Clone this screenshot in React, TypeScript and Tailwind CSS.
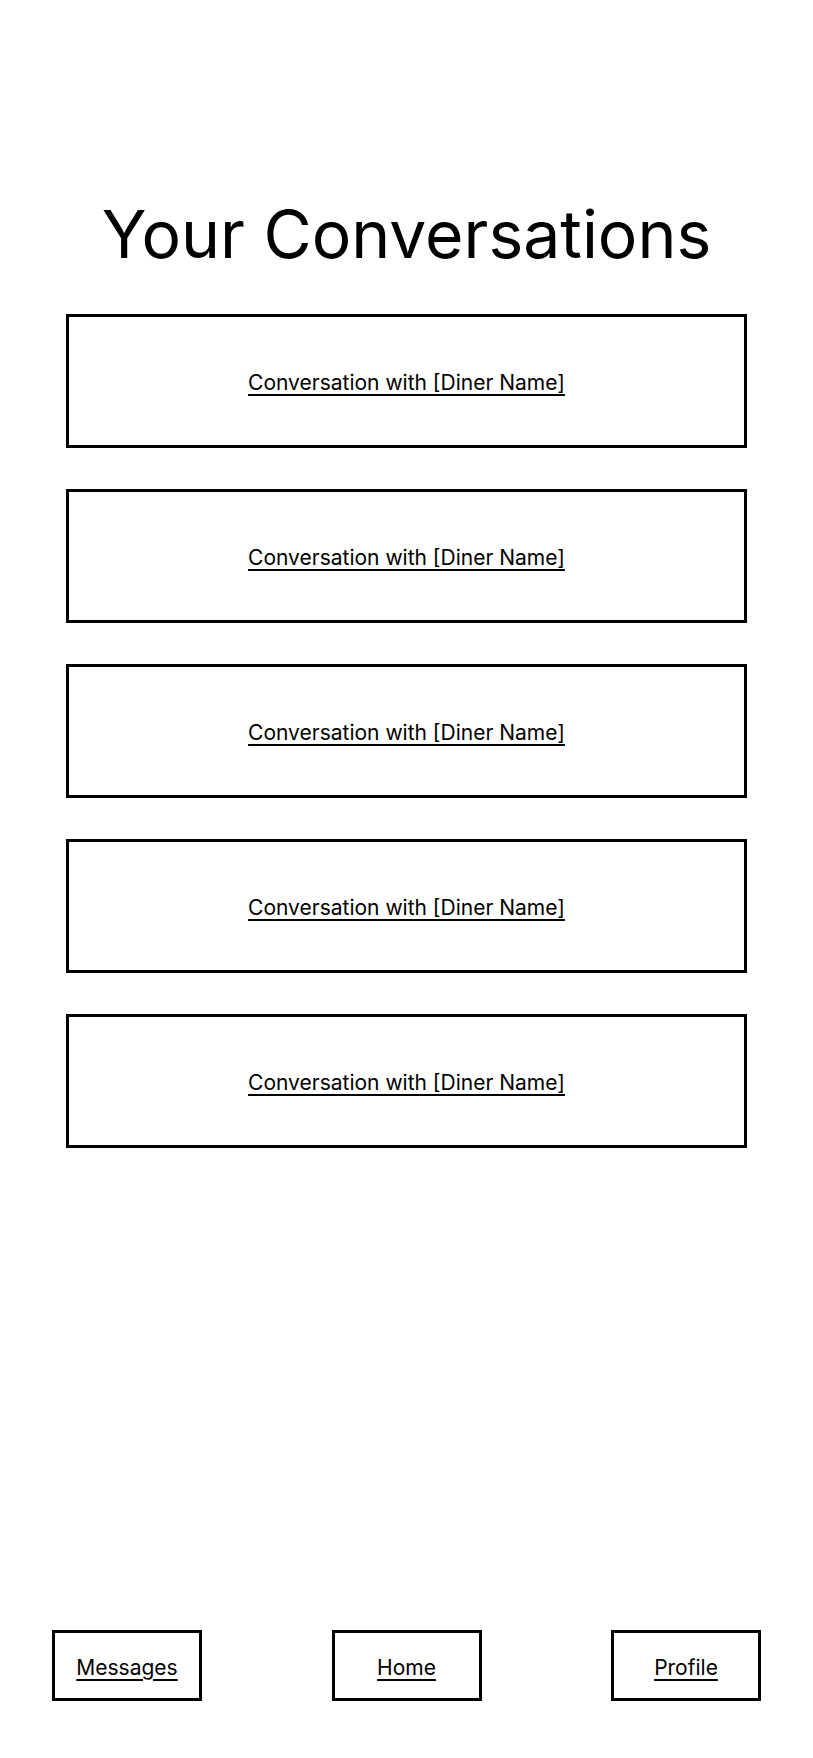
const conversations = [1, 2, 3, 4, 5];

function NavButton({ label }: { label: string }) {
  return (
    <a
      href="#"
      className="flex h-[71px] w-[150px] items-center justify-center border-[3px] border-black pt-[4px] text-[21px] text-black underline underline-offset-[4px]"
    >
      {label}
    </a>
  );
}

export default function App() {
  return (
    <div
      className="flex min-h-screen flex-col bg-white text-black"
      style={{ fontFamily: 'Inter, "Noto Sans", sans-serif' }}
    >
      <main className="flex-1 px-[66px] pt-[201px]">
        <h1 className="text-center text-[66px] font-normal leading-none">Your Conversations</h1>

        <ul className="mt-[47px] flex flex-col gap-[41px]">
          {conversations.map((id) => (
            <li key={id}>
              <a
                href="#"
                className="flex h-[134px] items-center justify-center border-[3px] border-black pt-[4px] text-[21px] underline underline-offset-[4px]"
              >
                Conversation with [Diner Name]
              </a>
            </li>
          ))}
        </ul>
      </main>

      <nav className="flex items-center justify-between px-[52px] pb-[57px]">
        <NavButton label="Messages" />
        <NavButton label="Home" />
        <NavButton label="Profile" />
      </nav>
    </div>
  );
}
